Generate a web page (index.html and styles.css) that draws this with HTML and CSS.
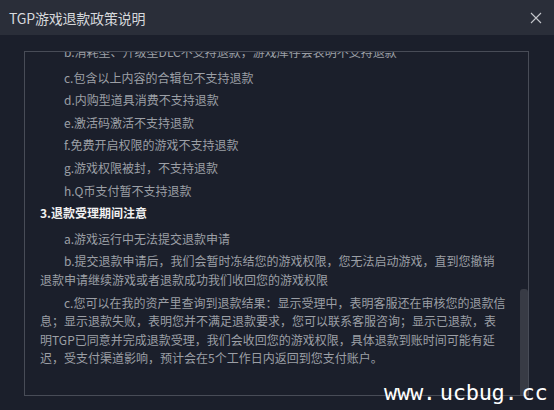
FILE: index.html
```html
<!DOCTYPE html>
<html lang="zh-CN">
 <head>
  <meta charset="UTF-8" />
  <meta name="viewport" content="width=device-width, initial-scale=1.0" />
  <title>TGP游戏退款政策说明</title>
  <link rel="stylesheet" href="styles.css">
 </head>
 <body>
  <div class="dialog">
   <!-- title bar -->
   <header class="title-bar">
    <h1>TGP游戏退款政策说明</h1>
    <svg class="close" width="12" height="12" viewBox="0 0 12 12">
     <path d="M1 1 L11 11 M11 1 L1 11" stroke="#c4c6cb" stroke-width="1.1" fill="none" />
    </svg>
   </header>
   <!-- policy text, scrolled part way down -->
   <div class="panel">
    <div class="content">
     <p class="item first">b.消耗型、升级型DLC不支持退款，游戏库存会表明不支持退款</p>
     <p class="item">c.包含以上内容的合辑包不支持退款</p>
     <p class="item">d.内购型道具消费不支持退款</p>
     <p class="item">e.激活码激活不支持退款</p>
     <p class="item">f.免费开启权限的游戏不支持退款</p>
     <p class="item">g.游戏权限被封，不支持退款</p>
     <p class="item">h.Q币支付暂不支持退款</p>
     <h2>3.退款受理期间注意</h2>
     <p class="item">a.游戏运行中无法提交退款申请</p>
     <p class="item">b.提交退款申请后，我们会暂时冻结您的游戏权限，您无法启动游戏，直到您撤销<br>退款申请继续游戏或者退款成功我们收回您的游戏权限</p>
     <p class="item">c.您可以在我的资产里查询到退款结果：显示受理中，表明客服还在审核您的退款信<br>息；显示退款失败，表明您并不满足退款要求，您可以联系客服咨询；显示已退款，表<br>明TGP已同意并完成退款受理，我们会收回您的游戏权限，具体退款到账时间可能有延<br>迟，受支付渠道影响，预计会在5个工作日内返回到您支付账户。</p>
    </div>
    <div class="scroll-thumb"></div>
   </div>
  </div>
  <div class="watermark">www<span class="dot">.</span>ucbug<span class="dot">.</span>cc</div>
 </body>
</html>
```

FILE: styles.css
```css
html, body {
 margin: 0;
 height: 100%;
}
body {
 background-color: #1b1f2b;
 font-family: "Noto Sans CJK SC", "Microsoft YaHei", sans-serif;
 overflow: hidden;
 position: relative;
}
.dialog {
 display: flex;
 flex-direction: column;
 height: 100%;
}
.title-bar {
 height: 35px;
 flex-shrink: 0;
 background-color: #2a2e39;
 display: flex;
 align-items: center;
 justify-content: space-between;
 padding: 0 12px 0 9px;
}
.title-bar h1 {
 margin: 0;
 font-size: 14px;
 font-weight: normal;
 color: #d6d8dc;
 letter-spacing: -0.2px;
}
.close {
 display: block;
}
.panel {
 position: relative;
 margin: 16px 25px 0 24px;
 height: 345px;
 border: 1px solid #484c57;
 box-sizing: border-box;
 overflow: hidden;
}
/* content is scrolled so the first line sits half under the panel edge */
.content {
 padding: 0 0 0 15px;
 margin-top: -9px;
}
.item {
 margin: 0 0 4px;
 font-size: 12px;
 line-height: 18.6px;
 color: #9c9fa6;
 text-indent: 24px;
 white-space: nowrap;
}
.item.first {
 margin-bottom: 7px;
}
.content h2 {
 margin: 2px 0 7px;
 font-size: 12px;
 line-height: 18.6px;
 font-weight: bold;
 color: #f0f0f0;
}
.scroll-thumb {
 position: absolute;
 right: 0;
 top: 237px;
 width: 8px;
 bottom: 0;
 background-color: #383b45;
 border-radius: 3px 3px 0 0;
}
.watermark {
 position: absolute;
 left: 384px;
 top: 378px;
 font-family: "DejaVu Sans Mono", monospace;
 font-size: 22px;
 line-height: 30px;
 color: #ffffff;
 letter-spacing: -0.3px;
}
.watermark .dot {
 margin-right: 4px;
}
```
